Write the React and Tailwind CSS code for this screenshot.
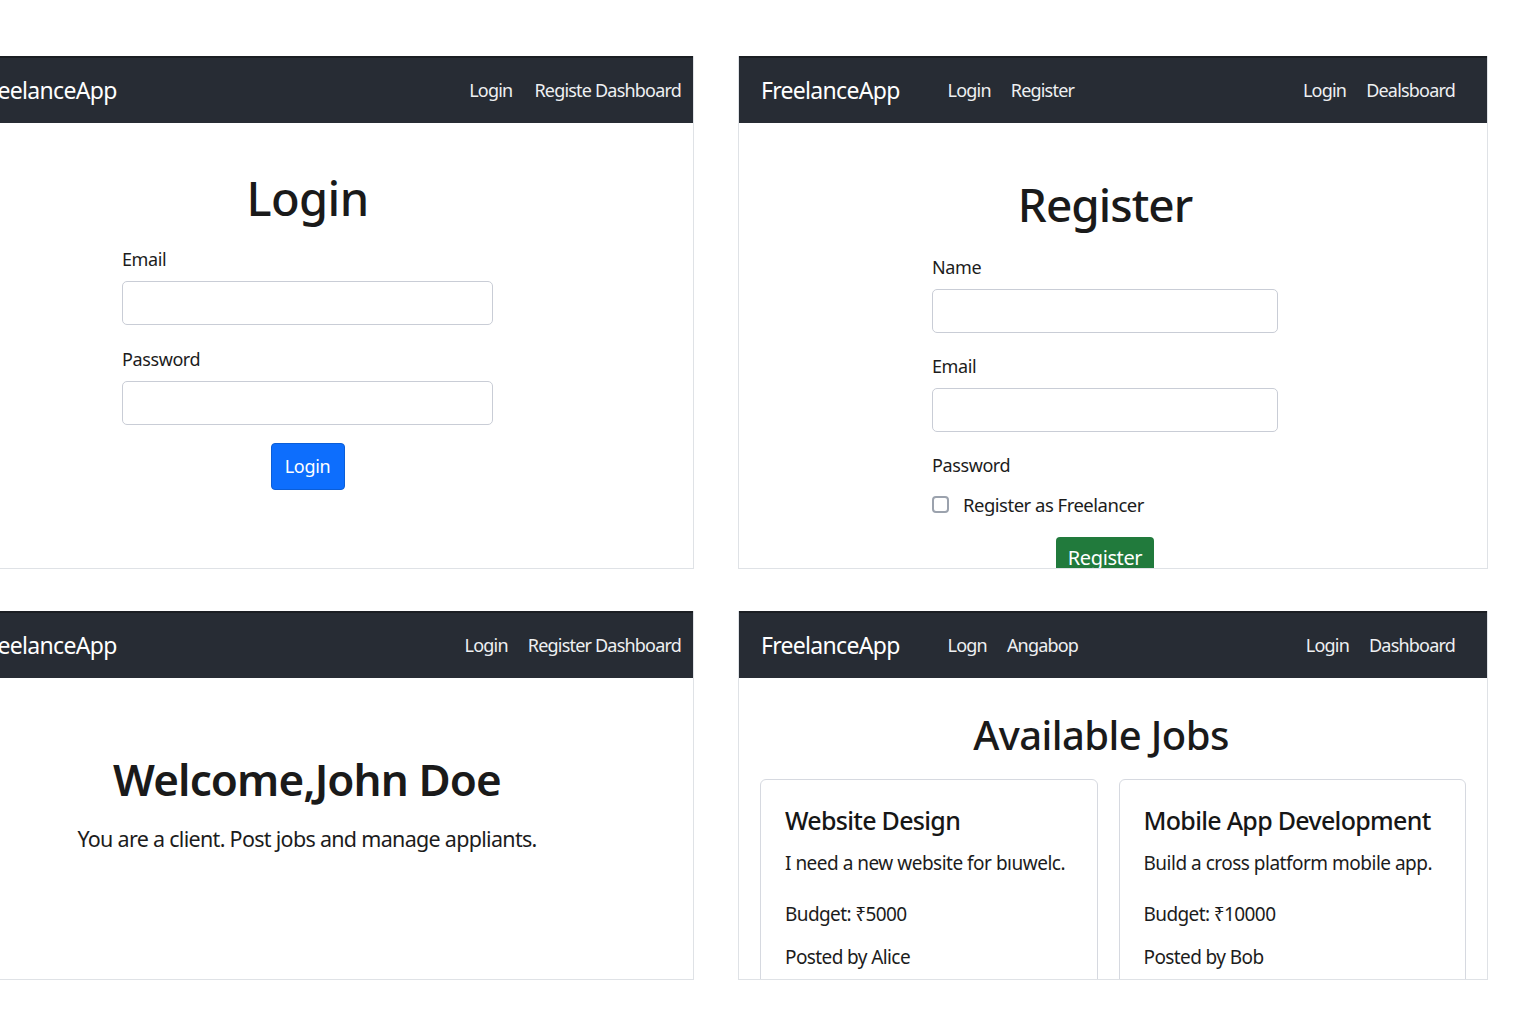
const FONT = { fontFamily: '"Noto Sans", "Open Sans", sans-serif' };

function NavLink({ children }) {
    return <span className="text-[18px] text-[#eef0f2] tracking-[-0.8px]">{children}</span>;
}

function Navbar({ clipped, left, right, rightGap = 'gap-5' }) {
    return (
        <div className="h-[67px] bg-[#272c34] border-t-2 border-[#1b1e23] flex items-center">
            <span className={`text-[23px] text-white tracking-[-0.7px] ${clipped ? 'ml-[-22px]' : 'ml-[22px]'}`}>
                FreelanceApp
            </span>
            {left && (
                <div className="flex items-center gap-5 ml-12">
                    {left.map((l) => (
                        <NavLink key={l}>{l}</NavLink>
                    ))}
                </div>
            )}
            <div className={`ml-auto flex items-center ${rightGap} ${clipped ? 'mr-3' : 'mr-8'}`}>
                {right.map((r) => (
                    <NavLink key={r}>{r}</NavLink>
                ))}
            </div>
        </div>
    );
}

function Field({ label }) {
    return (
        <div>
            <p className="text-[18px] text-[#1c1c1c] tracking-[-0.4px] leading-[24px]">{label}</p>
            <div className="mt-[10px] h-[44px] rounded-[5px] border border-[#c9cdd6] bg-white" />
        </div>
    );
}

function LoginPanel() {
    return (
        <div className="w-[694px] h-[513px] border-r border-b border-[#dfe2e6] overflow-hidden bg-white">
            <Navbar clipped right={['Login', 'Registe Dashboard']} rightGap="gap-[22px]" />
            <div className="ml-[122px] w-[371px] flex flex-col">
                <h1 className="text-center text-[47px] font-medium text-[#1a1a1a] leading-none mt-[52px] tracking-[-0.6px]">
                    Login
                </h1>
                <div className="mt-[25px]">
                    <Field label="Email" />
                </div>
                <div className="mt-[22px]">
                    <Field label="Password" />
                </div>
                <button className="self-center mt-[18px] w-[74px] h-[47px] rounded-[4px] bg-[#0d6efd] border border-[#0b5ed7] text-white text-[18px] tracking-[-0.3px]">
                    Login
                </button>
            </div>
        </div>
    );
}

function RegisterPanel() {
    return (
        <div className="w-[750px] h-[513px] border-l border-r border-b border-[#dfe2e6] overflow-hidden bg-white">
            <Navbar left={['Login', 'Register']} right={['Login', 'Dealsboard']} />
            <div className="ml-[193px] w-[346px] flex flex-col">
                <h1 className="text-center text-[46px] font-medium text-[#1a1a1a] leading-none mt-[58px] tracking-[-1px]">
                    Register
                </h1>
                <div className="mt-[28px]">
                    <Field label="Name" />
                </div>
                <div className="mt-[21px]">
                    <Field label="Email" />
                </div>
                <p className="mt-[21px] text-[18px] text-[#1c1c1c] tracking-[-0.4px] leading-[24px]">Password</p>
                <div className="mt-[14px] flex items-center gap-[14px]">
                    <span className="w-[17px] h-[17px] rounded-[4px] border-2 border-[#9ba2ad] bg-white" />
                    <span className="text-[18.5px] text-[#1c1c1c] tracking-[-0.5px]">Register as Freelancer</span>
                </div>
                <button className="self-center mt-[18px] w-[98px] h-[44px] rounded-t-[4px] bg-[#217a3c] text-white text-[20px] tracking-[-0.4px] flex justify-center pt-[6px]">
                    Register
                </button>
            </div>
        </div>
    );
}

function WelcomePanel() {
    return (
        <div className="w-[694px] h-[369px] border-r border-b border-[#dfe2e6] overflow-hidden bg-white">
            <Navbar clipped right={['Login', 'Register Dashboard']} rightGap="gap-[20px]" />
            <div className="w-[614px] flex flex-col items-center">
                <h1 className="text-[44px] font-semibold text-[#1a1a1a] leading-none mt-[79px] tracking-[-0.9px]">
                    Welcome,John Doe
                </h1>
                <p className="mt-[22px] text-[21.5px] text-[#1c1c1c] tracking-[-0.7px]">
                    You are a client. Post jobs and manage appliants.
                </p>
            </div>
        </div>
    );
}

function JobCard({ title, desc, budget, by, width }) {
    return (
        <div className={`${width} h-[210px] border border-[#d6d9e0] rounded-[6px] px-6 pt-[24px]`}>
            <h2 className="text-[25px] font-medium text-[#161616] leading-[32px] tracking-[-0.7px] whitespace-nowrap">
                {title}
            </h2>
            <p className="mt-[13px] text-[19px] text-[#1c1c1c] tracking-[-0.5px] whitespace-nowrap">{desc}</p>
            <p className="mt-[22px] text-[19px] text-[#1c1c1c] tracking-[-0.6px]">{budget}</p>
            <p className="mt-[15px] text-[19px] text-[#1c1c1c] tracking-[-0.6px]">{by}</p>
        </div>
    );
}

function JobsPanel() {
    return (
        <div className="w-[750px] h-[369px] border-l border-r border-b border-[#dfe2e6] overflow-hidden bg-white">
            <Navbar left={['Logn', 'Angabop']} right={['Login', 'Dashboard']} />
            <h1 className="text-center text-[40px] font-medium text-[#1a1a1a] leading-none mt-[37px] tracking-[-0.6px] pr-[24px]">
                Available Jobs
            </h1>
            <div className="mt-[24px] px-[21px] flex gap-[21px]">
                <JobCard
                    width="w-[338px]"
                    title="Website Design"
                    desc="I need a new website for bıuwelc."
                    budget="Budget: ₹5000"
                    by="Posted by Alice"
                />
                <JobCard
                    width="w-[348px]"
                    title="Mobile App Development"
                    desc="Build a cross platform mobile app."
                    budget="Budget: ₹10000"
                    by="Posted by Bob"
                />
            </div>
        </div>
    );
}

export default function App() {
    return (
        <div className="w-[1536px] h-[1024px] bg-white" style={FONT}>
            <div className="pt-[56px] flex gap-[44px]">
                <LoginPanel />
                <RegisterPanel />
            </div>
            <div className="mt-[42px] flex gap-[44px]">
                <WelcomePanel />
                <JobsPanel />
            </div>
        </div>
    );
}
